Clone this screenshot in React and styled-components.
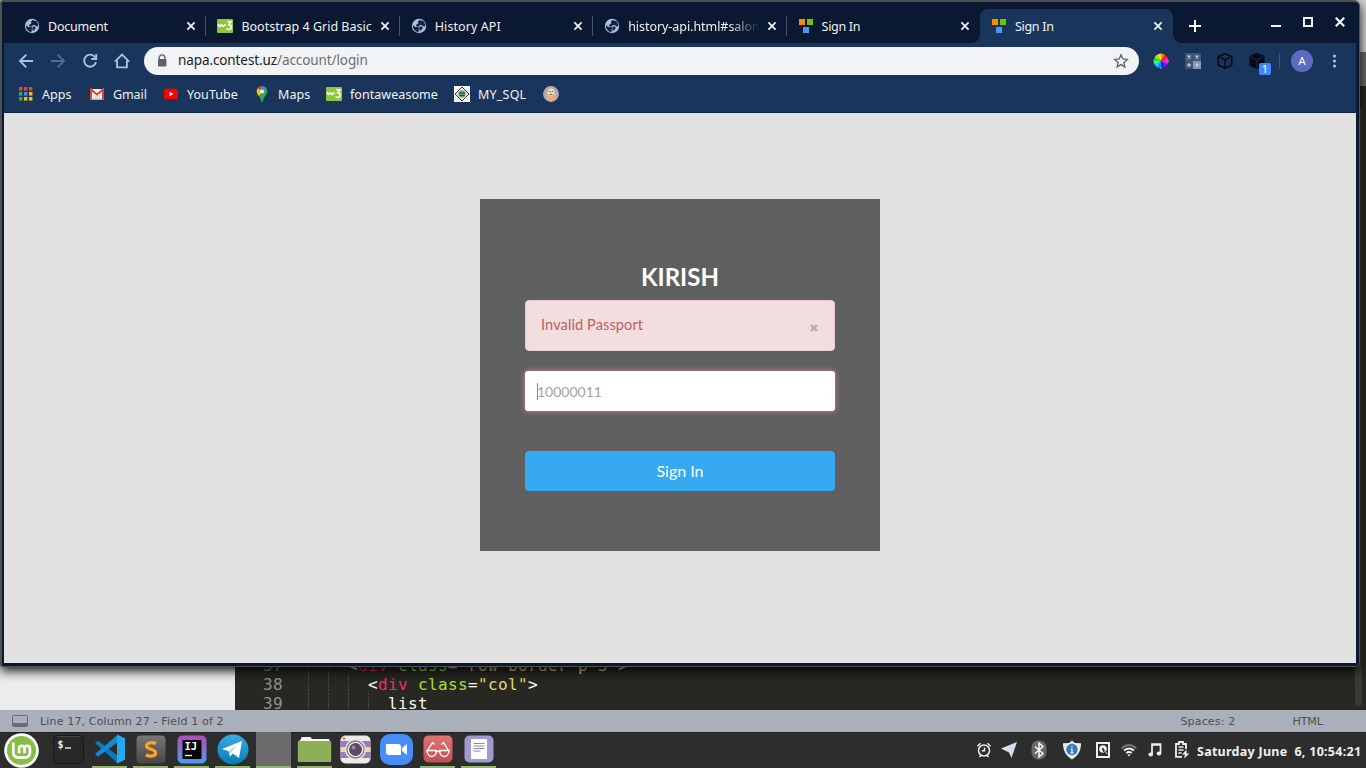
import React from "react";
import styled, { createGlobalStyle, css } from "styled-components";

const ui = '"Noto Sans", "Open Sans", sans-serif';
const mono = '"DejaVu Sans Mono", monospace';
const frame = "#0a1931";
const bar = "#1a355b";

const Global = createGlobalStyle`
  *, *::before, *::after { box-sizing: border-box; }
  body { margin: 0; overflow: hidden; background: #2d2d2d; }
  svg { display: block; flex: none; }
`;

const Desktop = styled.div`
  position: relative;
  display: flex;
  flex-direction: column;
  width: 1366px;
  height: 768px;
  overflow: hidden;
  font-family: ${ui};
`;

/* ---------- editor behind the browser ---------- */
const Editor = styled.section`
  flex: 1;
  min-height: 0;
  display: flex;
  flex-direction: column;
  background: #272822;
`;
const EditorTitle = styled.div`
  flex: none;
  height: 52px;
  background: #d0d0d0;
`;
const EditorTabs = styled.div`
  flex: none;
  height: 34px;
  background: #6a6a67;
`;
const EditorBody = styled.div`
  flex: 1;
  min-height: 0;
  display: flex;
  overflow: hidden;
`;
const Sidebar = styled.div`
  width: 235px;
  background: #ebecee;
`;
const Code = styled.div`
  flex: 1;
  display: flex;
  flex-direction: column;
  justify-content: flex-end;
  overflow: hidden;
`;
const CodeLines = styled.div`
  margin-bottom: -3px;
`;
const CodeLine = styled.div`
  display: flex;
  height: 19px;
  font: 16px/19px ${mono};
  letter-spacing: 0.37px;
  color: #f8f8f2;
  white-space: pre;
`;
const LineNo = styled.span`
  width: 53px;
  padding-left: 28px;
  margin-right: 20px;
  color: #90918b;
`;
const Guide = styled.i`
  width: 20px;
  border-left: 1px dotted #55564f;
`;
const Source = styled.span`
  white-space: pre;
`;
const Tok = styled.span`
  color: ${(p) => p.$c};
`;
const Scroll = styled.div`
  flex: none;
  width: 7px;
  margin: 21px 4px 4px 0;
  border-radius: 3px;
  background: #3a3b36;
`;
const Status = styled.div`
  flex: none;
  display: flex;
  align-items: center;
  height: 22px;
  padding: 0 43px 0 12px;
  background: #a9b0ba;
  color: #4b4e53;
  font: 11px "DejaVu Sans", sans-serif;
`;
const StatusText = styled.span`
  margin-left: ${(p) => p.$left};
  letter-spacing: ${(p) => p.$ls || "0"};
`;

/* ---------- browser ---------- */
const Browser = styled.main`
  position: absolute;
  left: 0;
  top: 0;
  width: 1360px;
  height: 667px;
  display: flex;
  flex-direction: column;
  border: solid #4d5055;
  border-width: 2px 1px 1px 2px;
  border-radius: 3px 6px 5px 3px;
  background: ${frame};
  padding: 0 3px 3px 2px;
  box-shadow: 0 4px 11px rgba(0, 0, 0, 0.9);
`;
const TabStrip = styled.div`
  flex: none;
  display: flex;
  height: 41px;
  padding: 7px 0 0 9px;
`;
const Tab = styled.div`
  position: relative;
  flex: none;
  display: flex;
  align-items: center;
  width: 193.4px;
  height: 34px;
  padding: 0 7px 0 11px;
  border-radius: 8px 8px 0 0;
  color: #eef1f5;
  ${(p) =>
    p.$sep &&
    css`
      &::after {
        content: "";
        position: absolute;
        right: 0;
        top: 7px;
        height: 20px;
        border-right: 1px solid #46536a;
      }
    `}
  ${(p) =>
    p.$active &&
    css`
      background: ${bar};
      &::before, &::after {
        content: "";
        position: absolute;
        bottom: 0;
        width: 8px;
        height: 8px;
      }
      &::before {
        left: -8px;
        background: radial-gradient(circle at 0 0, transparent 7.5px, ${bar} 8px);
      }
      &::after {
        right: -8px;
        background: radial-gradient(circle at 100% 0, transparent 7.5px, ${bar} 8px);
      }
    `}
`;
const TabTitle = styled.span`
  flex: 1;
  margin: 2px 3px 0 8px;
  overflow: hidden;
  white-space: nowrap;
  font-size: 12.5px;
  line-height: 18px;
  letter-spacing: ${(p) => p.$ls || "0"};
  ${(p) => p.$fade && "mask-image: linear-gradient(90deg, #000 76%, transparent 99%);"}
`;
const NewTab = styled.div`
  display: flex;
  align-items: center;
  height: 34px;
  margin-left: 14px;
`;
const WindowButtons = styled.div`
  display: flex;
  gap: 16px;
  margin: 5px 8px 0 auto;
`;
const Toolbar = styled.div`
  flex: none;
  display: flex;
  align-items: center;
  height: 36px;
  padding: 0 14px;
  background: ${bar};
`;
const Nav = styled.div`
  display: flex;
  gap: 16px;
  margin-right: 14px;
`;
const Address = styled.div`
  display: flex;
  align-items: center;
  width: 995px;
  height: 28px;
  padding: 0 10px 0 12px;
  border-radius: 14px;
  background: #f1f3f5;
  color: #6b6f74;
  font-size: 13.5px;
`;
const Url = styled.span`
  flex: 1;
  margin: -2px 0 0 10px;
  letter-spacing: -0.1px;
  b { font-weight: 400; color: #202124; }
`;
const Extensions = styled.div`
  display: flex;
  align-items: center;
  gap: 16px;
  margin-left: 14px;
`;
const ExtSlot = styled.div`
  position: relative;
`;
const Badge = styled.span`
  position: absolute;
  left: 10px;
  top: 10px;
  width: 12px;
  height: 12px;
  border-radius: 2px;
  background: #4285f4;
  color: #fff;
  font: 11px/12px ${ui};
  text-align: center;
`;
const Divider = styled.i`
  width: 1px;
  height: 16px;
  margin-left: 14px;
  background: #41587a;
`;
const Avatar = styled.span`
  width: 22px;
  height: 22px;
  margin: 0 13px 0 11px;
  border-radius: 50%;
  background: #5c6bc0;
  color: #fff;
  font: 11.5px/23px Roboto, sans-serif;
  text-align: center;
`;
const Bookmarks = styled.div`
  flex: none;
  display: flex;
  align-items: center;
  height: 34px;
  padding: 0 14px 4px;
  border-bottom: 1px solid #102344;
  background: ${bar};
`;
const Bookmark = styled.div`
  display: flex;
  align-items: center;
  gap: 8px;
  width: ${(p) => p.$w}px;
  color: #f0f3f7;
  font-size: 12.5px;
  white-space: nowrap;
`;
const BookmarkLabel = styled.span`
  padding-top: 2px;
  letter-spacing: ${(p) => p.$ls || "0.05px"};
`;

/* ---------- login page ---------- */
const Page = styled.div`
  flex: 1;
  display: flex;
  justify-content: center;
  align-items: flex-start;
  padding-top: 86px;
  background: #e2e2e2;
`;
const Card = styled.form`
  display: flex;
  flex-direction: column;
  width: 400px;
  height: 352px;
  padding: 61px 45px 0;
  background: #5f5f5f;
  font-family: Lato, sans-serif;
`;
const Heading = styled.h1`
  margin: 0;
  height: 40px;
  color: #fff;
  font-size: 24px;
  line-height: 34px;
  font-weight: 700;
  text-align: center;
`;
const Alert = styled.div`
  display: flex;
  align-items: center;
  justify-content: space-between;
  height: 51px;
  padding: 0 15px 2px;
  border: 1px solid #ebccd1;
  border-radius: 4px;
  background: #f2dede;
  color: #bb5f5e;
  font-size: 14.5px;
  letter-spacing: 0.12px;
`;
const Dismiss = styled.span`
  margin-top: 7px;
`;
const Field = styled.div`
  display: flex;
  align-items: center;
  height: 40px;
  margin-top: 20px;
  padding-left: 12px;
  border-radius: 3px;
  background: #fff;
  box-shadow: 0 0 6px #ce8483;
  color: #a2a2a2;
  font-size: 14px;
`;
const Caret = styled.i`
  width: 1px;
  height: 17px;
  margin-right: -1px;
  background: #8a8a8a;
`;
const Submit = styled.button`
  height: 40px;
  margin-top: 40px;
  padding: 0 0 2px;
  border: 0;
  border-radius: 4px;
  background: #36a9f1;
  color: #fff;
  font: 16px Lato, sans-serif;
`;

/* ---------- panel ---------- */
const Panel = styled.footer`
  flex: none;
  display: flex;
  height: 36px;
  padding-left: 4px;
  background: #2d2d2d;
  box-shadow: inset 0 1px #1d1d1d;
`;
const Launchers = styled.div`
  display: flex;
  gap: 6px;
  margin-left: 11px;
`;
const Launcher = styled.div`
  display: flex;
  align-items: center;
  justify-content: center;
  width: 35px;
  height: 36px;
  border-bottom: 2px solid ${(p) => (p.$open ? "#91b46f" : "transparent")};
  background: ${(p) => (p.$focus ? "#6b6b6b" : "transparent")};
`;
const Tray = styled.div`
  display: flex;
  align-items: center;
  margin-left: auto;
  padding-right: 5px;
`;
const TrayIcon = styled.div`
  display: flex;
  justify-content: center;
  width: ${(p) => p.$w}px;
`;
const Clock = styled.time`
  width: 164px;
  margin: 2px 0 0 3px;
  color: #f0f0f0;
  font: 700 12.5px ${ui};
  letter-spacing: 0.27px;
  white-space: pre;
`;

/* ---------- drawings ---------- */
const Globe = () => (
  <svg width="16" height="16" viewBox="0 0 16 16">
    <circle cx="8" cy="8" r="7.2" fill="#a9bddd" />
    <path d="M8.400 2 12.600 3.200 14.300 6.600 13.900 8.500 12 8.300 10.900 6.900H8.700L8.200 8.400H5.700L4.900 6.900 7.300 5.500 7.100 3.600zM1.800 7l2.400 2 3 .1 1.400 1.200-1 1.500v2.600L4.700 13.300 2.300 10.600zM8.800 8.400l2.300.2.500 1.600-1.600 2.300-1.600-.1.200-1.500z" fill="#13233f" />
  </svg>
);
const W3 = () => (
  <svg width="16" height="14" viewBox="0 0 16 14">
    <rect width="16" height="14" rx="1" fill="#8cc63f" />
    <path d="M1 5.200 2.400 7.500 4.600 5.600 5.800 7.600 8.800 5.300" fill="none" stroke="#fff" strokeWidth="1.500" strokeLinejoin="round" />
    <path d="M10 2.800h4L12 5.600c3 0 3.100 5-.1 5-1 0-1.800-.4-2.200-1.300" fill="none" stroke="#fff" strokeWidth="1.600" />
  </svg>
);
const Blocks = () => (
  <svg width="16" height="16" viewBox="0 0 16 16" shapeRendering="crispEdges">
    <path d="M1 1h6v6H1z" fill="#ff8c00" />
    <path d="M9 1h6v6H9z" fill="#6fc400" />
    <path d="M5 9h6v6H5z" fill="#4a95f5" />
  </svg>
);
const CloseX = ({ size = 16, r = 3.6, w = 1.8 }) => (
  <svg width={size} height={size} viewBox="-8 -8 16 16">
    <path d={`M${-r} ${-r}L${r} ${r}M${r} ${-r}L${-r} ${r}`} stroke="#eef1f5" strokeWidth={w} />
  </svg>
);
const navPaths = {
  back: "M15 8H2M8.3 1.7 2 8l6.3 6.3",
  forward: "M1 8h13M7.7 1.7 14 8l-6.3 6.3",
  reload: "M13.2 4.4A6 6 0 1 0 14 9M14.2 1v5H9.3",
  home: "M.9 8.7 8 1.6l7.1 7.1M3.1 7.6V14.4H12.9V7.6",
};
const NavIcon = ({ name }) => (
  <svg width="16" height="16" viewBox="0 0 16 16" fill="none" stroke={name === "forward" ? "#526b91" : "#a9c0e2"} strokeWidth="1.900">
    <path d={navPaths[name]} />
  </svg>
);
const Lock = () => (
  <svg width="12" height="14" viewBox="0 0 12 14">
    <path d="M3.200 6V3.700a2.800 2.800 0 0 1 5.600 0V6" fill="none" stroke="#5f6368" strokeWidth="1.400" />
    <rect x="2" y="5" width="8.400" height="7.500" rx="1" fill="#5f6368" />
  </svg>
);
const Star = () => (
  <svg width="16" height="16" viewBox="0 0 16 16">
    <path d="m8 1.800 1.800 4.100 4.500.5-3.400 3 1 4.500L8 11.600l-3.900 2.300 1-4.500-3.400-3 4.500-.5z" fill="none" stroke="#5f6368" strokeWidth="1.300" />
  </svg>
);
const wheel = ["#ffe100", "#ff9100", "#ff2020", "#ff20a0", "#e020ff", "#5a20ff", "#2020ff", "#2080ff", "#10d8ff", "#20ffa0", "#18e018", "#a0f000"];
const Wheel = () => (
  <svg width="16" height="16" viewBox="-8 -8 16 16">
    {wheel.map((c, i) => {
      const a = (i * Math.PI) / 6 - 2.1;
      const b = a + Math.PI / 6 + 0.03;
      return <path key={c} fill={c} d={`M0 0L${7.3 * Math.cos(a)} ${7.3 * Math.sin(a)}A7.3 7.3 0 0 1 ${7.3 * Math.cos(b)} ${7.3 * Math.sin(b)}Z`} />;
    })}
    <path d="M-8 0h2M8 0H6M0-8v2M0 8V6" stroke="#999" />
  </svg>
);
const Calc = () => (
  <svg width="16" height="16" viewBox="0 0 16 16">
    <path d="M0 0h16v16H0z" fill="#40566e" />
    <path d="M8 8h8v8H8z" fill="#7d9ab8" />
    <path d="m2.500 2.500 3 3m0-3-3 3m8-3 3 3m0-3-3 3M4 10v4M2 12h4M10.500 12h3M12 10.500v3" stroke="#d2dbe5" strokeWidth="1.100" />
  </svg>
);
const Cube = ({ solid }) => (
  <svg width="16" height="16" viewBox="0 0 16 16">
    <path d="M8 .8 14.800 3.600V12L8 15.300 1.200 12V3.600z" fill={solid ? "#050c18" : "none"} stroke="#050c18" strokeWidth="1.600" strokeLinejoin="round" />
    <path d="M1.500 3.600 8 6.700l6.500-3.100M8 6.700v8.500" fill="none" stroke={solid ? "#1a355b" : "#050c18"} strokeWidth={solid ? 0.7 : 1.5} />
  </svg>
);
const Dots = () => (
  <svg width="16" height="16" viewBox="0 0 16 16" fill="#a9c0e2">
    <circle cx="8.500" cy="3" r="1.600" /><circle cx="8.500" cy="8" r="1.600" /><circle cx="8.500" cy="13" r="1.600" />
  </svg>
);
const AppsGrid = () => (
  <svg width="16" height="16" viewBox="0 0 16 16">
    {["#ea4335", "#ea4335", "#ea4335", "#34a853", "#4285f4", "#fbbc05", "#34a853", "#fbbc05", "#fbbc05"].map((c, i) => (
      <rect key={i} x={1 + (i % 3) * 5} y={1 + Math.floor(i / 3) * 5} width="3.400" height="3.600" fill={c} />
    ))}
  </svg>
);
const Gmail = () => (
  <svg width="16" height="16" viewBox="0 0 16 16">
    <path d="M1 3h14v10.500H1z" fill="#f2f2f2" />
    <path d="m3 13.500 5-5 5 5z" fill="#d9d9d9" />
    <path d="M2 13.500v-10l6 5 6-5v10" fill="none" stroke="#dc4437" strokeWidth="2" />
  </svg>
);
const YouTube = () => (
  <svg width="16" height="16" viewBox="0 0 16 16">
    <rect x="1" y="2.700" width="14" height="10.600" rx="2.600" fill="#f00" />
    <path d="m6.600 5.700 3.800 2.300-3.800 2.300z" fill="#fff" />
  </svg>
);
const MapPin = () => (
  <svg width="16" height="16" viewBox="0 0 16 16">
    <path d="M8 .2a5.300 5.300 0 0 0-5.300 5.300c0 3.700 4.200 5.200 4.400 10.200h1.800C9.100 10.700 13.300 9.200 13.300 5.500A5.300 5.300 0 0 0 8 .2" fill="#34a853" />
    <path d="M3.500 8A5.300 5.300 0 0 1 3.900 2.100L8 5.500 4.900 10Z" fill="#fbbc04" />
    <path d="M3.900 2.100A5.300 5.300 0 0 1 7 .3L8 5.500Z" fill="#ea4335" />
    <path d="M7 .3a5.300 5.300 0 0 1 5.700 2.900L8 5.500Z" fill="#4285f4" />
    <circle cx="8" cy="5.500" r="1.900" fill="#fff" />
  </svg>
);
const Sql = () => (
  <svg width="16" height="16" viewBox="0 0 16 16">
    <path d="M0 0h16v16H0z" fill="#f4f4f2" />
    <path d="m8 1 7 7-7 7-7-7z" fill="#dce6dc" stroke="#3b3b3b" />
    <circle cx="8" cy="8" r="3.500" fill="#6a967c" />
    <path d="M5 7h6M5.500 9.500h5" stroke="#28483c" />
  </svg>
);
const Face = () => (
  <svg width="16" height="16" viewBox="0 0 16 16">
    <circle cx="8" cy="8" r="7.300" fill="#8fb0d6" stroke="#d6a684" strokeWidth="1.200" />
    <ellipse cx="8" cy="9" rx="4.800" ry="6" fill="#e8ad84" />
    <ellipse cx="8" cy="6" rx="3.300" ry="3.500" fill="#f6e2bd" />
    <path d="M5.800 5.500h1.600m1.200 0h1.600M6.500 8.300h3" stroke="#6c5148" />
  </svg>
);

const Mint = () => (
  <svg width="36" height="36" viewBox="0 0 36 36">
    <circle cx="17.500" cy="18.500" r="17.300" fill="#fff" />
    <circle cx="17.500" cy="18.500" r="14.600" fill="#86be43" />
    <path d="M9.300 10.500v10.300a4.800 4.800 0 0 0 4.800 4.800h7a4.800 4.800 0 0 0 4.800-4.800v-4.200a2.700 2.700 0 0 0-5.400 0v4.600m0-4.600a2.700 2.700 0 0 0-5.400 0v4.600" fill="none" stroke="#fff" strokeWidth="2.700" />
  </svg>
);
const Terminal = () => (
  <svg width="31" height="29" viewBox="0 0 31 29">
    <rect x=".5" y=".5" width="30" height="28" rx="4" fill="#292929" stroke="#171717" />
    <path d="M4 1.500h23" stroke="#484848" />
    <text x="4.500" y="13" fill="#eee" fontFamily={mono} fontSize="10" fontWeight="700">$</text>
    <path d="M12 13h6" stroke="#eee" strokeWidth="1.400" />
  </svg>
);
const VsCode = () => (
  <svg width="32" height="30" viewBox="0 0 32 30">
    <path d="m1 9 3-2.300L24 22v7.500z" fill="#087bc5" />
    <path d="m1 20 3 2.500L24 8V.5z" fill="#138bd4" />
    <path d="m23 .5 8 3.700v21.500l-8 3.800z" fill="#29a8ef" />
  </svg>
);
const Sublime = () => (
  <svg width="30" height="29" viewBox="0 0 30 29">
    <defs><linearGradient id="sub" x2="0" y2="1"><stop stopColor="#777" /><stop offset="1" stopColor="#464646" /></linearGradient></defs>
    <rect x=".5" y=".5" width="29" height="28" rx="4" fill="url(#sub)" />
    <path d="M20 8.400C15 6.700 10.300 8 10.600 11.200c.3 3.600 9 2.500 9 6.600 0 3.600-5 4.200-9.700 2.300" fill="none" stroke="#ffa323" strokeWidth="3.200" />
  </svg>
);
const Idea = () => (
  <svg width="30" height="29" viewBox="0 0 30 29">
    <defs><linearGradient id="idea" x2="0" y2="1"><stop stopColor="#b14cb5" /><stop offset="1" stopColor="#4b9bf0" /></linearGradient></defs>
    <rect x=".5" y=".5" width="29" height="28" rx="5" fill="url(#idea)" />
    <path d="M5.500 5h19v19h-19z" fill="#050505" />
    <text x="7.500" y="15" fill="#fff" fontFamily={mono} fontSize="10.500" fontWeight="700">IJ</text>
    <path d="M8 20.500h7" stroke="#fff" strokeWidth="1.300" />
  </svg>
);
const Telegram = () => (
  <svg width="32" height="31" viewBox="0 0 32 31">
    <defs><linearGradient id="tg" x2="0" y2="1"><stop stopColor="#37aee2" /><stop offset="1" stopColor="#087bb8" /></linearGradient></defs>
    <ellipse cx="16" cy="15.500" rx="15.500" ry="15" fill="url(#tg)" />
    <path d="m5 15 20-8-3 17-6-4.500-3 3-1.500-5.500z" fill="#fff" />
    <path d="m11.500 17 9-6.500-6.500 8-1 4z" fill="#b9d7e8" />
  </svg>
);
const Folder = () => (
  <svg width="35" height="27" viewBox="0 0 35 27">
    <path d="M2 5 4 3 4.500 1h9L15 3h17l1 3z" fill="#f6f6f2" />
    <rect x=".8" y="5" width="33.400" height="21" rx="1" fill="#8caf58" />
  </svg>
);
const Camera = () => (
  <svg width="31" height="29" viewBox="0 0 31 29">
    <rect x=".5" y=".5" width="30" height="28" rx="5" fill="#eceae4" />
    <path d="M.5 6h30v17H.5z" fill="#a178c0" />
    <path d="M.5 12h30v5H.5z" fill="#e1dd9b" />
    <circle cx="15.500" cy="14.500" r="10.500" fill="#eceae4" />
    <circle cx="15.500" cy="14.500" r="8.500" fill="none" stroke="#81778a" strokeWidth="1.300" />
    <circle cx="15.500" cy="14.500" r="6.500" fill="#604967" />
    <circle cx="13.500" cy="12.500" r="2" fill="#9c86a5" /><circle cx="4" cy="3.500" r="1.200" fill="#ef5e58" />
  </svg>
);
const Zoom = () => (
  <svg width="33" height="31" viewBox="0 0 33 31">
    <rect width="33" height="31" rx="10" fill="#458df8" />
    <path d="M6 10h12a3 3 0 0 1 3 3v8H9a3 3 0 0 1-3-3zM22 14l5-4v11l-5-4z" fill="#fff" />
  </svg>
);
const Glasses = () => (
  <svg width="30" height="28" viewBox="0 0 30 28">
    <defs><linearGradient id="gl" x2="0" y2="1"><stop stopColor="#e27373" /><stop offset="1" stopColor="#c24f52" /></linearGradient></defs>
    <rect x=".5" y=".5" width="29" height="27" rx="5" fill="url(#gl)" />
    <path d="M4.500 15.500 9.500 7.500 11.500 9.500M25.500 15.500 20.500 7.500 18.500 9.500M12.800 17q2.200-1.500 4.400 0" fill="none" stroke="#fff" strokeWidth="1.400" />
    <path d="M4 15.500h9.300c.5 7.500-8.800 8.500-9.300 0zM16.700 15.500H26c-.5 8.500-9.800 7.500-9.300 0z" fill="none" stroke="#fff" strokeWidth="1.400" />
  </svg>
);
const Doc = () => (
  <svg width="30" height="28" viewBox="0 0 30 28">
    <rect x=".5" y=".5" width="29" height="27" rx="5" fill="#a09ad0" />
    <path d="M7 4h16v20H7z" fill="#fff" />
    <path d="M9.500 8.500h11M9.500 11h11M9.500 13.500h11M9.500 16h7" stroke="#8c84bb" />
  </svg>
);

const Alarm = () => (
  <svg width="16" height="16" viewBox="0 0 16 16" fill="none" stroke="#eee" strokeWidth="1.500">
    <circle cx="8" cy="8.500" r="5.500" /><path d="M8.500 5.500v3.300H5.800M1.500 4.300 4.500 1.300M14.500 4.300l-3-3M3.500 15l1.700-2M12.500 15l-1.700-2" />
  </svg>
);
const Plane = () => (
  <svg width="18" height="18" viewBox="0 0 18 18"><path d="M1 7.500 17 1 11.500 17 9 11.500z" fill="#d5deeb" /></svg>
);
const Bluetooth = () => (
  <svg width="16" height="20" viewBox="0 0 16 20">
    <rect x=".5" y=".5" width="15" height="19" rx="7" fill="#686868" />
    <path d="m4 6.500 8 7-4 3.500V3l4 3.500-8 7" fill="none" stroke="#fff" strokeWidth="1.400" />
  </svg>
);
const Shield = () => (
  <svg width="20" height="20" viewBox="0 0 20 20">
    <path d="M10 .5 13 3l6 .3C19 11 16 16 10 19.500 4 16 1 11 1 3.300L7 3z" fill="#ececec" />
    <circle cx="10" cy="9.500" r="5.700" fill="#3978bd" />
    <path d="M10 6v1.300M8.700 9H10v4M8.300 13h3.400" fill="none" stroke="#fff" strokeWidth="1.200" />
  </svg>
);
const Disk = () => (
  <svg width="16" height="16" viewBox="0 0 16 16">
    <path d="M2 1h12v14H2z" fill="none" stroke="#eee" strokeWidth="2" />
    <circle cx="8" cy="7" r="3.800" fill="#eee" /><circle cx="8" cy="7" r="1.100" fill="#2d2d2d" />
    <path d="m8 8 4 4" stroke="#2d2d2d" strokeWidth="2" /><path d="m9.500 9 3 3" stroke="#eee" />
  </svg>
);
const Wifi = () => (
  <svg width="16" height="16" viewBox="0 0 16 16" fill="none" strokeWidth="1.900">
    <path d="M.7 6.200q7.300-6.300 14.600 0" stroke="#777" />
    <path d="M3 8.600q5-4.200 10 0M5.300 11.100q2.700-2.200 5.400 0" stroke="#f1f1f1" />
    <path d="m6.500 12.800 1.500 1.700 1.500-1.700q-1.500-1-3 0z" fill="#f1f1f1" />
  </svg>
);
const Music = () => (
  <svg width="16" height="16" viewBox="0 0 16 16">
    <path d="M5 12V2h8.500v9M5 3h8" fill="none" stroke="#f1f1f1" strokeWidth="1.700" />
    <ellipse cx="3.700" cy="12.500" rx="2.300" ry="2" fill="#f1f1f1" /><ellipse cx="12" cy="11.500" rx="2.300" ry="2" fill="#f1f1f1" />
  </svg>
);
const Battery = () => (
  <svg width="16" height="18" viewBox="0 0 16 18">
    <path d="M8 15.800H2V3h3V1h4v2h3v5" fill="none" stroke="#f1f1f1" strokeWidth="1.800" />
    <path d="M4.500 6h5M4.500 9h5M4.500 12h3" stroke="#f1f1f1" strokeWidth="1.600" />
    <path d="M12.500 8.500 8 13.500h3l-1 4 5.500-5h-3z" fill="#f1f1f1" />
  </svg>
);

const tabs = [
  { icon: <Globe />, title: "Document", sep: true, ls: "-0.2px" },
  { icon: <W3 />, title: "Bootstrap 4 Grid Basic", sep: true },
  { icon: <Globe />, title: "History API", sep: true, ls: "0.08px" },
  { icon: <Globe />, title: "history-api.html#salom", sep: true, fade: true, ls: "-0.05px" },
  { icon: <Blocks />, title: "Sign In", ls: "-0.3px" },
  { icon: <Blocks />, title: "Sign In", active: true, ls: "-0.3px" },
];
const bookmarks = [
  [<AppsGrid />, "Apps", 71],
  [<Gmail />, "Gmail", 74, "-0.1px"],
  [<YouTube />, "YouTube", 91],
  [<MapPin />, "Maps", 72],
  [<W3 />, "fontaweasome", 128],
  [<Sql />, "MY_SQL", 89, "0.2px"],
  [<Face />, "", 16],
];
const launchers = [
  [<Terminal />], [<VsCode />, 1], [<Sublime />, 1], [<Idea />, 1], [<Telegram />, 1],
  [null, 1, 1], [<Folder />, 1], [<Camera />], [<Zoom />], [<Glasses />, 1], [<Doc />, 1],
];
const tray = [
  [<Alarm />, 25], [<Plane />, 26], [<Bluetooth />, 34], [<Shield />, 31], [<Disk />, 31],
  [<Wifi />, 22], [<Music />, 29], [<Battery />, 25],
];

export default function App() {
  return (
    <Desktop>
      <Global />
      <Editor>
        <EditorTitle />
        <EditorTabs />
        <EditorBody>
          <Sidebar />
          <Code>
            <CodeLines>
              <CodeLine>
                <LineNo>37</LineNo><Guide /><Guide />
                <Source>
                  {"<"}<Tok $c="#f92672">div</Tok>{" "}<Tok $c="#a6e22e">class</Tok>=<Tok $c="#e6db74">"row border p-3"</Tok>{">"}
                </Source>
              </CodeLine>
              <CodeLine>
                <LineNo>38</LineNo><Guide /><Guide /><Guide />
                <Source>
                  {"<"}<Tok $c="#f92672">div</Tok>{" "}<Tok $c="#a6e22e">class</Tok>=<Tok $c="#e6db74">"col"</Tok>{">"}
                </Source>
              </CodeLine>
              <CodeLine>
                <LineNo>39</LineNo><Guide /><Guide /><Guide /><Guide />
                <Source>list</Source>
              </CodeLine>
            </CodeLines>
          </Code>
          <Scroll />
        </EditorBody>
        <Status>
          <svg width="16" height="12" viewBox="0 0 16 12">
            <rect x=".5" y=".5" width="15" height="11" rx="1" fill="none" stroke="#686b72" />
            <path d="M1 8h14v3H1z" fill="#686b72" />
          </svg>
          <StatusText $left="12px" $ls="0.16px">Line 17, Column 27 - Field 1 of 2</StatusText>
          <StatusText $left="auto" $ls="0.16px">Spaces: 2</StatusText>
          <StatusText $left="57px">HTML</StatusText>
        </Status>
      </Editor>

      <Panel>
        <Mint />
        <Launchers>
          {launchers.map(([icon, open, focus], i) => (
            <Launcher key={i} $open={open} $focus={focus}>{icon}</Launcher>
          ))}
        </Launchers>
        <Tray>
          {tray.map(([icon, w], i) => <TrayIcon key={i} $w={w}>{icon}</TrayIcon>)}
          <Clock>Saturday June  6, 10:54:21</Clock>
        </Tray>
      </Panel>

      <Browser>
        <TabStrip>
          {tabs.map((t, i) => (
            <Tab key={i} $sep={t.sep} $active={t.active}>
              {t.icon}
              <TabTitle $ls={t.ls} $fade={t.fade}>{t.title}</TabTitle>
              <CloseX />
            </Tab>
          ))}
          <NewTab>
            <svg width="16" height="16" viewBox="0 0 16 16"><path d="M8 2v12M2 8h12" stroke="#fff" strokeWidth="2" /></svg>
          </NewTab>
          <WindowButtons>
            <svg width="16" height="16" viewBox="0 0 16 16"><path d="M3 12h10" stroke="#eef1f5" strokeWidth="2" /></svg>
            <svg width="16" height="16" viewBox="0 0 16 16"><path d="M4 4h8v8H4z" fill="none" stroke="#eef1f5" strokeWidth="2" /></svg>
            <CloseX r={4.2} w={2.2} />
          </WindowButtons>
        </TabStrip>
        <Toolbar>
          <Nav>
            <NavIcon name="back" /><NavIcon name="forward" /><NavIcon name="reload" /><NavIcon name="home" />
          </Nav>
          <Address>
            <Lock />
            <Url><b>napa.contest.uz</b>/account/login</Url>
            <Star />
          </Address>
          <Extensions>
            <ExtSlot><Wheel /></ExtSlot>
            <ExtSlot><Calc /></ExtSlot>
            <ExtSlot><Cube /></ExtSlot>
            <ExtSlot><Cube solid /><Badge>1</Badge></ExtSlot>
          </Extensions>
          <Divider />
          <Avatar>A</Avatar>
          <Dots />
        </Toolbar>
        <Bookmarks>
          {bookmarks.map(([icon, label, w, ls], i) => (
            <Bookmark key={i} $w={w}>{icon}{label && <BookmarkLabel $ls={ls}>{label}</BookmarkLabel>}</Bookmark>
          ))}
        </Bookmarks>
        <Page>
          <Card>
            <Heading>KIRISH</Heading>
            <Alert>
              Invalid Passport
              <Dismiss>
                <svg width="10" height="10" viewBox="0 0 10 10"><path d="m2 2 6 6m0-6L2 8" stroke="#bfb0b0" strokeWidth="2.700" /></svg>
              </Dismiss>
            </Alert>
            <Field><Caret />10000011</Field>
            <Submit type="button">Sign In</Submit>
          </Card>
        </Page>
      </Browser>
    </Desktop>
  );
}
